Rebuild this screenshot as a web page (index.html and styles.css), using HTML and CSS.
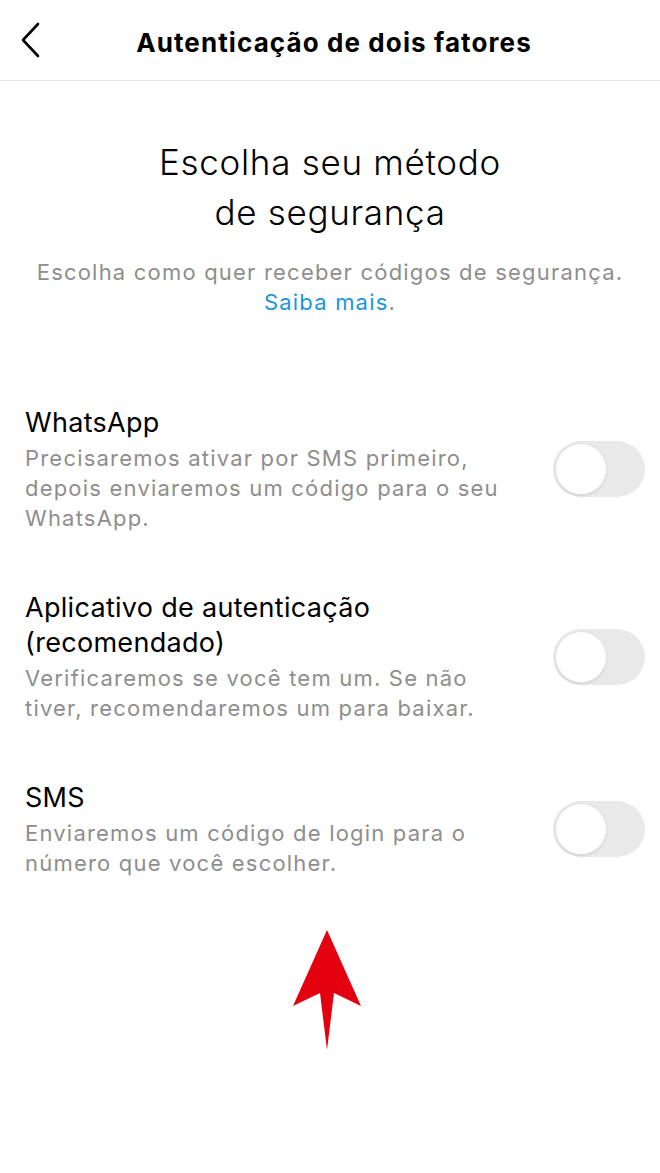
FILE: index.html
```html
<!DOCTYPE html>
<html lang="pt-BR">
<head>
    <meta charset="UTF-8">
    <meta name="viewport" content="width=device-width, initial-scale=1.0">
    <title>Autenticação de dois fatores</title>
    <link rel="stylesheet" href="styles.css">
</head>
<body>
    <header class="top-bar">
        <button class="back-btn" aria-label="Voltar">
            <svg width="24" height="40" viewBox="0 0 24 40">
                <polyline points="20,4 5,20 20,36" fill="none" stroke="#000" stroke-width="2.6" stroke-linecap="round" stroke-linejoin="round"/>
            </svg>
        </button>
        <h1 class="top-title">Autenticação de dois fatores</h1>
    </header>

    <main class="content">
        <section class="intro">
            <h2 class="intro-title">Escolha seu método<br>de segurança</h2>
            <p class="intro-text">Escolha como quer receber códigos de segurança.<br><a href="#" class="link">Saiba mais</a>.</p>
        </section>

        <ul class="methods">
            <li class="method method-whatsapp">
                <div class="method-info">
                    <div class="method-name">WhatsApp</div>
                    <div class="method-desc">Precisaremos ativar por SMS primeiro, depois enviaremos um código para o seu WhatsApp.</div>
                </div>
                <span class="toggle"><span class="knob"></span></span>
            </li>
            <li class="method">
                <div class="method-info">
                    <div class="method-name">Aplicativo de autenticação (recomendado)</div>
                    <div class="method-desc">Verificaremos se você tem um. Se não tiver, recomendaremos um para baixar.</div>
                </div>
                <span class="toggle"><span class="knob"></span></span>
            </li>
            <li class="method">
                <div class="method-info">
                    <div class="method-name">SMS</div>
                    <div class="method-desc">Enviaremos um código de login para o número que você escolher.</div>
                </div>
                <span class="toggle"><span class="knob"></span></span>
            </li>
        </ul>

        <div class="arrow">
            <svg width="70" height="122" viewBox="0 0 70 122">
                <polygon points="34,0 68,76 41,63 34,120 27,63 0,76" fill="#e3000f"/>
            </svg>
        </div>
    </main>
</body>
</html>
```

FILE: styles.css
```css
body {
    margin: 0;
    background: #fff;
    font-family: Inter, "Noto Sans", sans-serif;
    color: #000;
}

.top-bar {
    height: 80px;
    border-bottom: 1px solid #e6e6e6;
    display: flex;
    align-items: center;
    position: relative;
}

.back-btn {
    background: none;
    border: none;
    padding: 0;
    margin-left: 18px;
    margin-top: 0;
    display: flex;
}

.top-title {
    position: absolute;
    left: 0;
    right: 0;
    margin: 0;
    padding: 4px 0 0 8px;
    text-align: center;
    font-size: 26px;
    font-weight: 700;
    letter-spacing: 1.1px;
    pointer-events: none;
}

.intro {
    text-align: center;
    margin-top: 56px;
}

.intro-title {
    margin: 0;
    font-size: 35px;
    line-height: 50px;
    font-weight: 300;
    letter-spacing: 0.7px;
}

.intro-text {
    margin: 20px 0 0;
    font-size: 22px;
    line-height: 30px;
    letter-spacing: 1.2px;
    color: #8e8e8e;
}

.link {
    color: #1c96d8;
    text-decoration: none;
}

.methods {
    list-style: none;
    margin: 0;
    padding: 0 15px 0 25px;
}

.method {
    display: flex;
    align-items: center;
    margin-top: 57px;
}

.method-whatsapp {
    margin-top: 88px;
}

.method-info {
    flex: 1;
    max-width: 500px;
}

.method-name {
    font-size: 27px;
    line-height: 35px;
    letter-spacing: 0.3px;
}

.method-desc {
    margin-top: 3px;
    font-size: 22px;
    line-height: 30px;
    letter-spacing: 1.2px;
    color: #8e8e8e;
}

.toggle {
    margin-left: auto;
    width: 92px;
    height: 56px;
    border-radius: 28px;
    background: #e9e9ea;
    display: flex;
    align-items: center;
    padding-left: 3px;
    box-sizing: border-box;
    flex-shrink: 0;
}

.knob {
    width: 50px;
    height: 50px;
    border-radius: 50%;
    background: #fff;
    box-shadow: 0 0 0 1px #e2e2e2, 0 2px 3px rgba(0, 0, 0, 0.12);
}

.arrow {
    display: flex;
    justify-content: center;
    margin-top: 52px;
    padding-right: 4px;
}
```
